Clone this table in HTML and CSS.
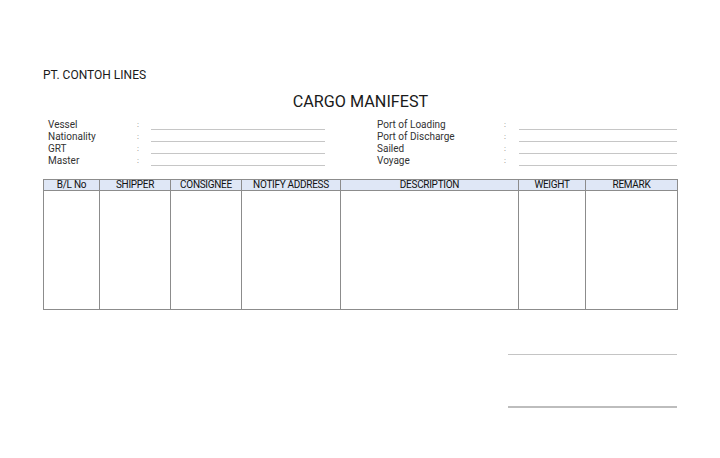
FILE: index.html
```html
<!DOCTYPE html>
<html>
<head>
<meta charset="utf-8">
<link rel="stylesheet" href="styles.css">
</head>
<body>
<div class="page">
  <div class="company">PT. CONTOH LINES</div>
  <h1 class="title">CARGO MANIFEST</h1>
  <div class="info">
    <div class="info-col left">
      <div class="row"><span class="lbl">Vessel</span><span class="colon">:</span><span class="fill"></span></div>
      <div class="row"><span class="lbl">Nationality</span><span class="colon">:</span><span class="fill"></span></div>
      <div class="row"><span class="lbl">GRT</span><span class="colon">:</span><span class="fill"></span></div>
      <div class="row"><span class="lbl">Master</span><span class="colon">:</span><span class="fill"></span></div>
    </div>
    <div class="info-col right">
      <div class="row"><span class="lbl">Port of Loading</span><span class="colon">:</span><span class="fill"></span></div>
      <div class="row"><span class="lbl">Port of Discharge</span><span class="colon">:</span><span class="fill"></span></div>
      <div class="row"><span class="lbl">Sailed</span><span class="colon">:</span><span class="fill"></span></div>
      <div class="row"><span class="lbl">Voyage</span><span class="colon">:</span><span class="fill"></span></div>
    </div>
  </div>
  <table class="manifest">
    <colgroup>
      <col class="c1"><col class="c2"><col class="c3"><col class="c4"><col class="c5"><col class="c6"><col class="c7">
    </colgroup>
    <thead>
      <tr><th>B/L No</th><th>SHIPPER</th><th>CONSIGNEE</th><th>NOTIFY ADDRESS</th><th>DESCRIPTION</th><th>WEIGHT</th><th>REMARK</th></tr>
    </thead>
    <tbody>
      <tr><td></td><td></td><td></td><td></td><td></td><td></td><td></td></tr>
    </tbody>
  </table>
  <div class="signs">
    <div class="sign-line first"></div>
    <div class="sign-line second"></div>
  </div>
</div>
</body>
</html>
```

FILE: styles.css
```css
html, body {
  margin: 0;
  padding: 0;
  background: #ffffff;
}
body {
  font-family: Roboto, "Liberation Sans", Arial, sans-serif;
  color: #222222;
}
.page {
  width: 634px;
  margin-left: 43px;
  padding-top: 68px;
}
.company {
  font-size: 12px;
  line-height: 14px;
  color: #1a1a1a;
}
.title {
  margin: 11px 0 0 0;
  font-size: 16.2px;
  line-height: 18px;
  font-weight: 400;
  text-align: center;
  color: #1a1a1a;
  padding-left: 1px;
}
.info {
  display: flex;
  margin-top: 8px;
}
.info-col {
  display: flex;
  flex-direction: column;
}
.info-col.left {
  width: 282px;
  padding-left: 5px;
}
.info-col.right {
  width: 300px;
  padding-left: 47px;
}
.row {
  display: flex;
  align-items: flex-start;
  height: 12px;
  font-size: 10px;
  line-height: 12px;
  color: #333333;
}
.lbl {
  flex: none;
}
.left .lbl { width: 89px; }
.right .lbl { width: 127px; }
.colon {
  flex: none;
  font-size: 8px;
  color: #777777;
}
.left .colon { width: 14px; }
.right .colon { width: 15px; }
.fill {
  flex: 1;
  height: 10px;
  border-bottom: 1px solid #c6c6c6;
}
.left .fill { max-width: 174px; }
.right .fill { max-width: 158px; }
.manifest {
  margin-top: 12px;
  width: 634px;
  border-collapse: collapse;
  table-layout: fixed;
}
.c1 { width: 56px; }
.c2 { width: 71px; }
.c3 { width: 71px; }
.c4 { width: 99px; }
.c5 { width: 178px; }
.c6 { width: 67px; }
.c7 { width: 92px; }
.manifest th {
  background: #dfe7f6;
  border: 1px solid #8c8c8c;
  height: 10px;
  padding: 0;
  font-size: 10px;
  line-height: 10px;
  font-weight: 400;
  letter-spacing: -0.3px;
  color: #111111;
  text-align: center;
}
.manifest td {
  border: 1px solid #8c8c8c;
  height: 118px;
  padding: 0;
}
.signs {
  display: flex;
  flex-direction: column;
  align-items: flex-end;
}
.sign-line {
  width: 169px;
  border-top: 1px solid #c4c4c4;
}
.sign-line.first {
  margin-top: 44px;
}
.sign-line.second {
  margin-top: 51px;
  border-top: 2px solid #bdbdbd;
}
```
